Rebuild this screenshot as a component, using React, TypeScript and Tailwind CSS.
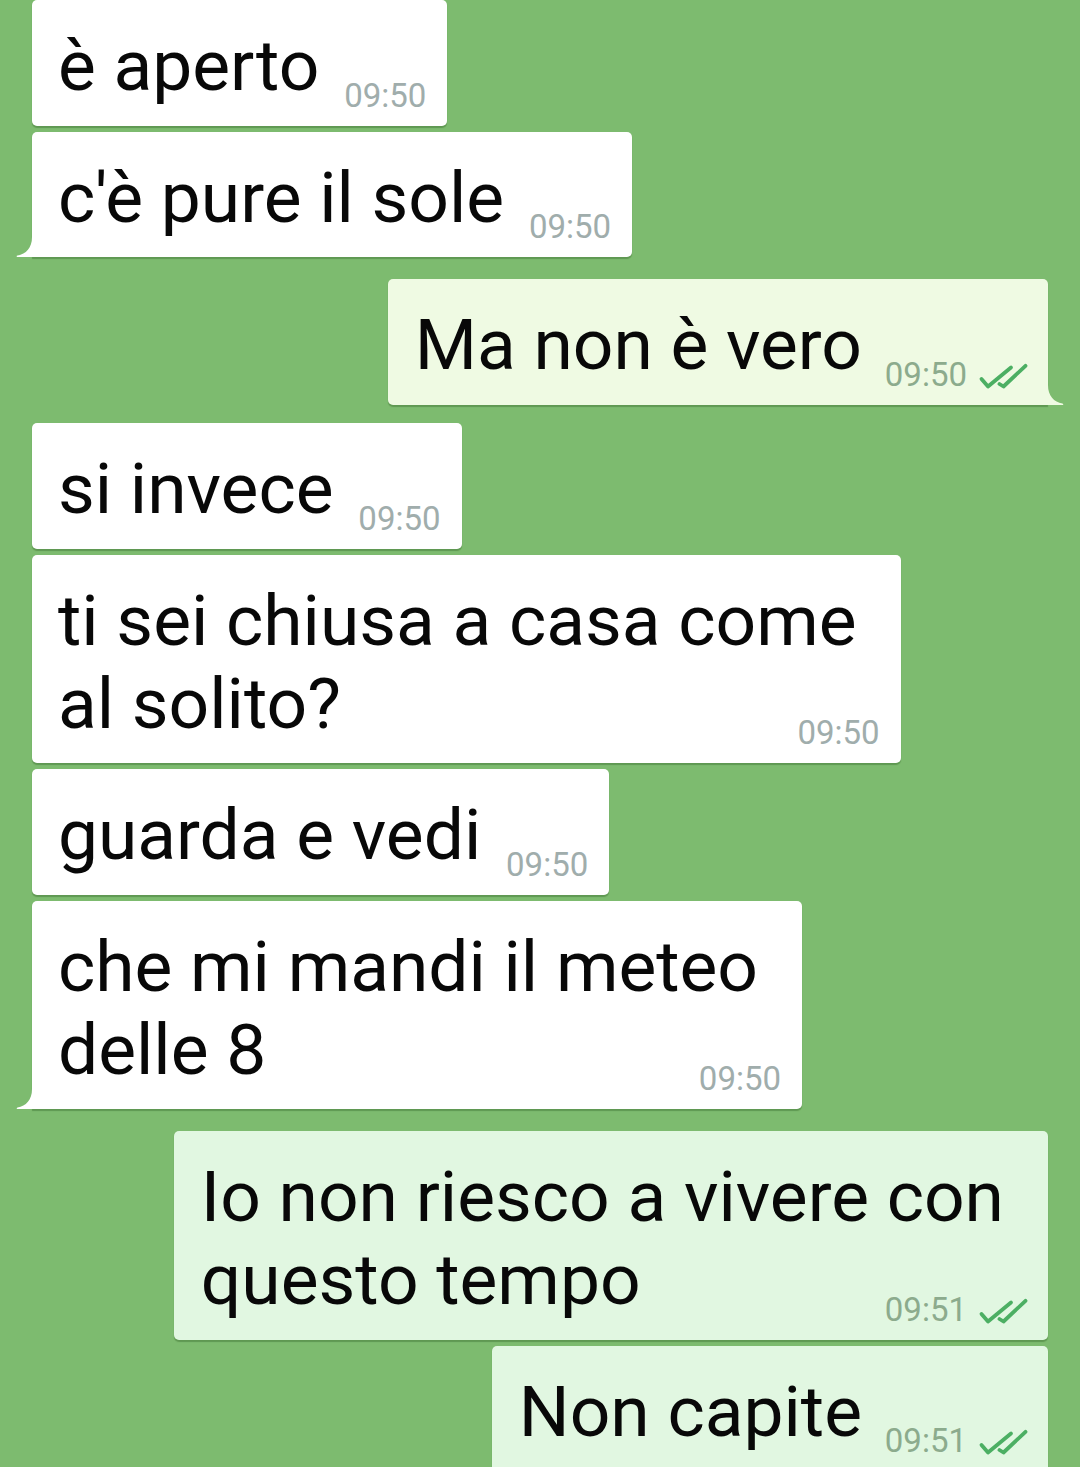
import React from "react";

type Msg = {
  lines: string[];
  time: string;
  out?: boolean;
  tail?: boolean;
  tone?: "a" | "b";
  gap: string;
};

const messages: Msg[] = [
  { lines: ["è aperto"], time: "09:50", gap: "mt-0" },
  { lines: ["c'è pure il sole"], time: "09:50", tail: true, gap: "mt-[6px]" },
  { lines: ["Ma non è vero"], time: "09:50", out: true, tail: true, tone: "a", gap: "mt-[22px]" },
  { lines: ["si invece"], time: "09:50", gap: "mt-[18.5px]" },
  { lines: ["ti sei chiusa a casa come", "al solito?"], time: "09:50", gap: "mt-[6px]" },
  { lines: ["guarda e vedi"], time: "09:50", gap: "mt-[6px]" },
  { lines: ["che mi mandi il meteo", "delle 8"], time: "09:50", tail: true, gap: "mt-[6px]" },
  { lines: ["Io non riesco a vivere con", "questo tempo"], time: "09:51", out: true, tone: "b", gap: "mt-[22px]" },
  { lines: ["Non capite"], time: "09:51", out: true, tone: "b", gap: "mt-[6px]" },
];

function Ticks() {
  return (
    <svg width="50" height="28" viewBox="0 0 50 28" fill="none" stroke="#4caf63" strokeWidth="3.8" strokeLinecap="round" strokeLinejoin="round">
      <path d="M3.5 17 L10 24.5 L33 5.5" />
      <path d="M21.5 22 L25.5 24.5 L47.5 3.8" />
    </svg>
  );
}

function TailIn() {
  return (
    <svg className="absolute left-[-16px] bottom-0" width="20" height="42" viewBox="0 0 20 42">
      <path d="M16 0 V22 C16 33 10 39 1.5 40.5 Q0 41 1 42 H20 V0 Z" fill="#ffffff" />
    </svg>
  );
}

function TailOut({ fill }: { fill: string }) {
  return (
    <svg className="absolute right-[-16px] bottom-0" width="20" height="42" viewBox="0 0 20 42">
      <path d="M4 0 V22 C4 33 10 39 18.5 40.5 Q20 41 19 42 H0 V0 Z" fill={fill} />
    </svg>
  );
}

function Bubble({ m }: { m: Msg }) {
  const multi = m.lines.length > 1;
  const fill = m.out ? (m.tone === "a" ? "#effae3" : "#e1f7e1") : "#ffffff";
  const bg = m.out ? (m.tone === "a" ? "bg-[#effae3]" : "bg-[#e1f7e1]") : "bg-white";
  const corner = m.tail ? (m.out ? "rounded-[5px] rounded-br-none" : "rounded-[5px] rounded-bl-none") : "rounded-[5px]";
  return (
    <div
      className={`relative ${m.gap} ${bg} ${corner} shadow-[0_1.5px_1px_rgba(40,90,30,0.35)] pt-[24px] pb-[18.5px] ${
        m.out ? "pl-[27px]" : "pl-[26px]"
      } ${multi ? "pr-[44px]" : m.out ? "pr-[20px]" : "pr-[21px]"}`}
    >
      {m.tail && !m.out && <TailIn />}
      {m.tail && m.out && <TailOut fill={fill} />}
      <div className="text-[71.3px] leading-[83px] text-[#080808] whitespace-nowrap">
        {m.lines.map((l, i) => (
          <div key={i}>
            {l}
            {i === m.lines.length - 1 && (
              <span className={`inline-block ${m.out ? "w-[166px]" : "w-[107px]"}`} />
            )}
          </div>
        ))}
      </div>
      <div
        className={`absolute bottom-[14px] flex items-end gap-[11px] ${m.out ? "right-[20px]" : "right-[21px]"}`}
      >
        <span className={`text-[33px] leading-none ${m.out ? "text-[#8cab8d]" : "text-[#a0adac]"}`}>{m.time}</span>
        {m.out && (
          <span className="mb-[1px]">
            <Ticks />
          </span>
        )}
      </div>
    </div>
  );
}

export default function App() {
  return (
    <main
      className="w-[1080px] h-[1467px] overflow-hidden bg-[#7dbb6f]"
      style={{ fontFamily: "Roboto, 'Noto Sans', Arial, sans-serif" }}
    >
      <div className="flex flex-col px-[32px]">
        {messages.map((m, i) => (
          <div key={i} className={`flex ${m.out ? "justify-end" : "justify-start"}`}>
            <Bubble m={m} />
          </div>
        ))}
      </div>
    </main>
  );
}
